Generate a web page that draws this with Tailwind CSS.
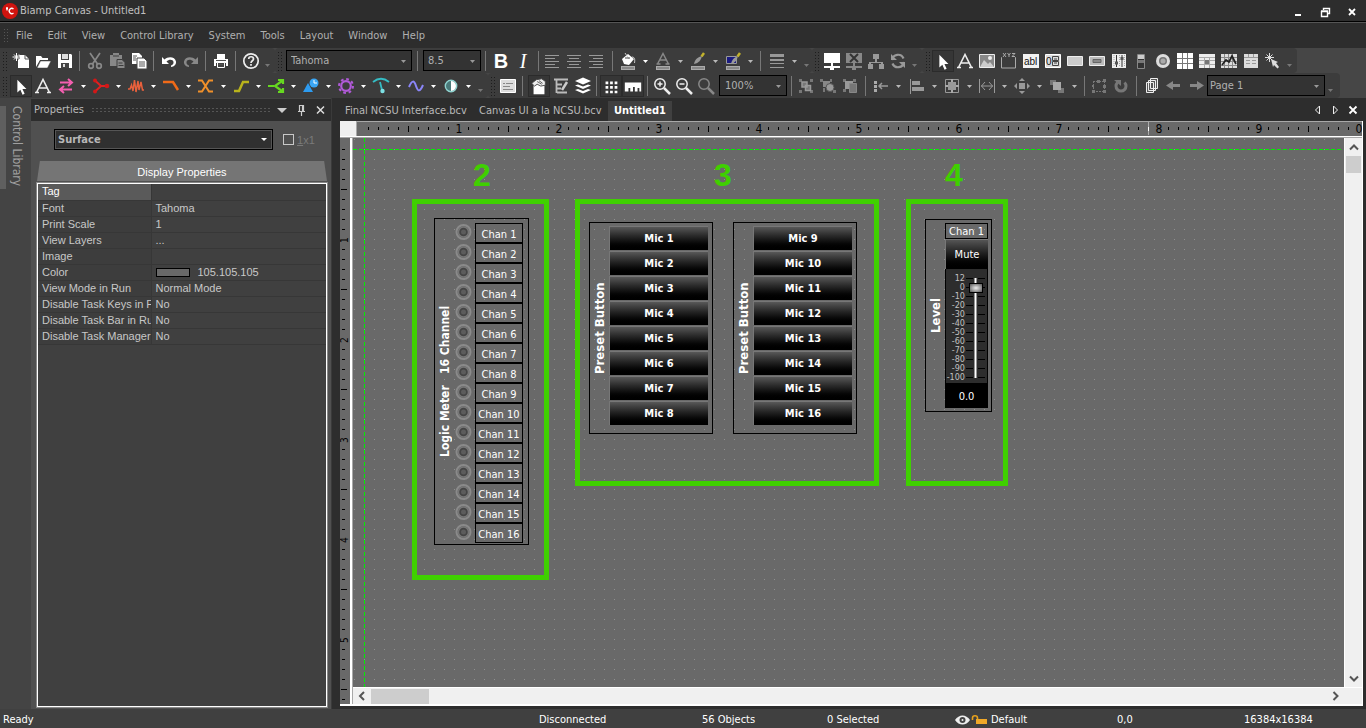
<!DOCTYPE html>
<html lang="en">
<head>
<meta charset="utf-8">
<title>Biamp Canvas - Untitled1</title>
<script src="https://cdn.jsdelivr.net/npm/@tailwindcss/browser@4"></script>
</head>
<body class="h-screen overflow-hidden flex flex-col bg-[#2d2d2d] text-[#b9b9b9] text-[11px] leading-4 font-['DejaVu_Sans_Condensed','Noto_Sans',sans-serif]">

<svg class="hidden">
  <symbol id="dn" viewBox="0 0 13 22"><path d="M4 10h5l-2.500 3z" fill="currentColor"/></symbol>
  <symbol id="more" viewBox="0 0 11 22"><path d="M3 14h5l-2.500 3z" fill="#777"/></symbol>
  <symbol id="arrow" viewBox="0 0 22 22"><path d="M7 3v14l3.300-3 2.400 5.500 2.300-1-2.400-5.300h4.400z" fill="#fff"/></symbol>
  <symbol id="letter" viewBox="0 0 22 22"><path d="M4.500 17.500L11 4.500l6.500 13M7 13h8M3 17.500h4M15 17.500h4" fill="none" stroke="#eee" stroke-width="1.600"/></symbol>
</svg>

<header class="h-[22px] shrink-0 flex items-center border-b border-black text-[#c0c0c0]">
  <svg class="w-[18px] h-[20px] ml-px mr-px shrink-0" viewBox="0 0 18 20"><circle cx="9" cy="10" r="8" fill="#d0140f"/><path d="M12.500 8a2.600 2.600 0 1 0 0 4M6 6v3.500M5 7.500h2" fill="none" stroke="#fff" stroke-width="1.300"/></svg>
  <h1 class="flex-1">Biamp Canvas - Untitled1</h1>
  <div class="flex text-white [&>button]:w-[27px] [&>button]:h-5">
    <button aria-label="Minimize"><svg class="w-[27px] h-5" viewBox="0 0 27 20"><path d="M10 14h6" stroke="#fff" stroke-width="2"/></svg></button>
    <button aria-label="Restore"><svg class="w-[27px] h-5" viewBox="0 0 27 20"><path d="M11.500 9V7.500h6v5H16M9.500 10.500h6v5h-6zM9 10h7" fill="none" stroke="#fff" stroke-width="1.400"/></svg></button>
    <button aria-label="Close"><svg class="w-[27px] h-5" viewBox="0 0 27 20"><path d="M10 8l6 6M16 8l-6 6" stroke="#fff" stroke-width="1.800"/></svg></button>
  </div>
</header>

<nav class="h-[26px] shrink-0 flex items-center gap-[15px] pl-[3px] border-t border-[#555] text-[#b0b0b0]">
  <span class="w-[5px] h-4 -mr-[7px] bg-[radial-gradient(#555_1px,transparent_1px)] bg-size-[3px_3px]"></span>
  <a href="#">File</a><a href="#">Edit</a><a href="#">View</a><a href="#">Control Library</a><a href="#">System</a><a href="#">Tools</a><a href="#">Layout</a><a href="#">Window</a><a href="#">Help</a>
</nav>

<div class="h-[50px] shrink-0 bg-[#464646] [&_button]:shrink-0 [&_button]:w-[22px] [&_button]:h-[22px] [&_svg]:h-[22px] [&_svg]:w-full [&_hr]:w-px [&_hr]:h-[20px] [&_hr]:bg-[#777] [&_hr]:border-0 [&_hr]:shrink-0">
  <!-- standard, text and objects toolbars -->
  <div class="flex h-[25px]">
    <div class="w-[275px] shrink-0 bg-[#3c3c3c] rounded-r flex items-center pl-[2px]">
      <span class="w-[6px] h-5 mr-[2px] bg-[radial-gradient(#1d1d1d_1px,transparent_1px)] bg-size-[3px_3px]"></span>
      <button aria-label="New"><svg viewBox="0 0 22 22"><path d="M9 5h6l4 4v9H8v-8l2-2z" fill="#fff"/><path d="M15 5v4h4" fill="none" stroke="#555"/><path d="M6.500 3v8M2.500 7h8M4 4.500l5 5M9 4.500l-5 5" stroke="#fff"/></svg></button>
      <button aria-label="Open"><svg viewBox="0 0 22 22"><path d="M4 17V6h5l1.500 2H16v2H8z" fill="#fff"/><path d="M5 18l3.500-7H19l-3.500 7z" fill="#fff" stroke="#3c3c3c" stroke-width=".5"/></svg></button>
      <button aria-label="Save"><svg viewBox="0 0 22 22"><path d="M4 4h13l1 1v13H4z" fill="#fff"/><path d="M7 4h8v6H7zM7 13h8v5H7z" fill="#444"/><path d="M8 4h6v5H8zM9 14h2v3H9z" fill="#ddd"/></svg></button>
      <hr class="mx-[3px]">
      <button class="ml-px" aria-label="Cut"><svg viewBox="0 0 22 22"><g fill="none" stroke="#888" stroke-width="1.700"><path d="M6 3l7.500 11M16 3L8.500 14"/><circle cx="7" cy="16" r="2.300"/><circle cx="15" cy="16" r="2.300"/></g></svg></button>
      <button aria-label="Paste"><svg viewBox="0 0 22 22"><path d="M4 5h3V3h6v2h3v4h-5v7H4z" fill="#888"/><path d="M11 9.500h5l3 3v6h-8z" fill="#888" stroke="#3c3c3c"/><path d="M7 6h6M12.500 13h4M12.500 15.500h5" stroke="#3c3c3c"/></svg></button>
      <button aria-label="Copy"><svg viewBox="0 0 22 22"><path d="M4 3h7l3 3v8H4z" fill="#fff"/><path d="M9 8h7l3 3v8H9z" fill="#fff" stroke="#444"/><path d="M5 6h4M5 8h3M5 10h3M11 12h6M11 14h6M11 16h6" stroke="#555"/></svg></button>
      <hr class="mx-[3px]">
      <button class="ml-px" aria-label="Undo"><svg viewBox="0 0 22 22"><path d="M4 7v7h7l-2.500-2.500C11 9 15 9 15.500 12c.3 2-1 3-2.500 3.500v1.500c3-.3 5.500-2.500 5-5.500-.8-5-8-5.500-11.500-2z" fill="#fff"/></svg></button>
      <button aria-label="Redo"><svg viewBox="0 0 22 22"><path d="M18 7v7h-7l2.500-2.500C11 9 7 9 6.500 12c-.3 2 1 3 2.500 3.500v1.500c-3-.3-5.500-2.500-5-5.500.8-5 8-5.500 11.500-2z" fill="#888"/></svg></button>
      <hr class="mx-[3px]">
      <button class="ml-px" aria-label="Print"><svg viewBox="0 0 22 22"><path d="M7 4h8v5H7z" fill="#fff"/><path d="M4 9h14v7h-2v-3H6v3H4z" fill="#fff"/><path d="M7.500 12.500h7v5h-7z" fill="#444" stroke="#fff"/><path d="M9 14.500h4M6 10.500h10" stroke="#555"/></svg></button>
      <hr class="mx-[3px]">
      <button class="ml-px" aria-label="Help"><svg viewBox="0 0 22 22"><circle cx="11" cy="11" r="7.200" fill="none" stroke="#eee" stroke-width="1.700"/><path d="M8.700 9c0-3 4.800-3 4.800 0 0 1.800-2.500 1.800-2.500 4M11 14v1.700" fill="none" stroke="#eee" stroke-width="1.700"/></svg></button>
      <svg class="max-w-[11px]"><use href="#more"/></svg>
    </div>
    <div class="w-[537px] shrink-0 bg-[#3c3c3c] rounded flex items-center pl-[2px]">
      <span class="w-[6px] h-5 mr-[3px] bg-[radial-gradient(#1d1d1d_1px,transparent_1px)] bg-size-[3px_3px] shrink-0"></span>
      <div class="relative w-[126px] shrink-0"><select aria-label="Font" class="appearance-none block w-full h-[21px] bg-[#333] border border-black pl-1 text-[#b0b0b0]"><option>Tahoma</option></select><svg class="absolute right-[2px] top-0 max-w-[13px] pointer-events-none text-[#999]"><use href="#dn"/></svg></div>
      <hr class="mx-[5px]">
      <div class="relative w-[58px] shrink-0"><select aria-label="Font size" class="appearance-none block w-full h-[21px] bg-[#333] border border-black pl-1 text-[#b0b0b0]"><option>8.5</option></select><svg class="absolute right-[2px] top-0 max-w-[13px] pointer-events-none text-[#999]"><use href="#dn"/></svg></div>
      <hr class="mx-[4px]">
      <button aria-label="Bold" class="font-['Liberation_Sans'] font-bold text-[20px] leading-5 text-white">B</button>
      <button aria-label="Italic" class="font-['Liberation_Serif'] italic text-[20px] leading-5 text-white">I</button>
      <hr class="ml-[4px] mr-[2px]">
      <button aria-label="Align left"><svg viewBox="0 0 22 22"><path d="M4 5.500h14M4 8.500h10M4 11.500h14M4 14.500h10M4 17.500h14" stroke="#999"/></svg></button>
      <button aria-label="Align center"><svg viewBox="0 0 22 22"><path d="M4 5.500h14M6 8.500h10M4 11.500h14M6 14.500h10M4 17.500h14" stroke="#999"/></svg></button>
      <button aria-label="Align right"><svg viewBox="0 0 22 22"><path d="M4 5.500h14M8 8.500h10M4 11.500h14M8 14.500h10M4 17.500h14" stroke="#999"/></svg></button>
      <hr class="ml-[5px] mr-[4px]">
      <button aria-label="Fill"><svg viewBox="0 0 22 22"><path d="M5 9l6-5 6 5-5 6-5-1z" fill="#fff"/><path d="M8 3l4 6M15 7c3 0 3 3 2.500 6" fill="none" stroke="#ccc"/><path d="M8 8h5" stroke="#444"/><rect x="4.500" y="16.500" width="13" height="3" fill="#888" stroke="#aaa"/></svg></button><button aria-label="Fill menu" class="w-[13px]! text-white"><svg><use href="#dn"/></svg></button>
      <button aria-label="Text color"><svg viewBox="0 0 22 22"><path d="M5.500 14L11 3.500 16.500 14M8 10h6M4.500 14h4M13.500 14h4" fill="none" stroke="#888" stroke-width="1.500"/><rect x="4.500" y="16.500" width="13" height="3" fill="#888" stroke="#aaa"/></svg></button><button aria-label="Text color menu" class="w-[13px]!"><svg><use href="#dn"/></svg></button>
      <button aria-label="Line color"><svg viewBox="0 0 22 22"><path d="M7 14c1-5 4-7 8-8-1 4-3 7-8 8z" fill="#999"/><path d="M14.500 6.500L17 3" stroke="#c3b32c" stroke-width="2.500"/><rect x="4.500" y="16.500" width="13" height="3" fill="#888" stroke="#aaa"/></svg></button><button aria-label="Line color menu" class="w-[13px]!"><svg><use href="#dn"/></svg></button>
      <button aria-label="Border color"><svg viewBox="0 0 22 22"><path d="M4.500 6.500h10v7h-10z" fill="#1a1a80" stroke="#999"/><path d="M9 14c1-5 4-7 7-8-1 4-3 7-7 8z" fill="#999"/><path d="M15.500 6.500L18 3" stroke="#c3b32c" stroke-width="2.500"/><rect x="4.500" y="16.500" width="13" height="3" fill="#888" stroke="#aaa"/></svg></button><button aria-label="Border color menu" class="w-[13px]!"><svg><use href="#dn"/></svg></button>
      <hr class="ml-[3px] mr-[5px]">
      <button aria-label="Line width"><svg viewBox="0 0 22 22"><path d="M4 5.500h14" stroke="#999" stroke-width="3"/><path d="M4 10h14" stroke="#999" stroke-width="2"/><path d="M4 13.500h14M4 17.500h14" stroke="#999"/></svg></button><button aria-label="Line width menu" class="w-[13px]!"><svg><use href="#dn"/></svg></button>
      <svg class="max-w-[11px]"><use href="#more"/></svg>
    </div>
    <div class="w-[110px] shrink-0 bg-[#3c3c3c] rounded flex items-center pl-[2px]">
      <span class="w-[6px] h-5 mr-px bg-[radial-gradient(#1d1d1d_1px,transparent_1px)] bg-size-[3px_3px]"></span>
      <button aria-label="Connect"><svg viewBox="0 0 22 22"><path d="M3 3h16v10h-7v3h7v2h-6v2H9v-2H3v-2h7v-3H3z" fill="#fff"/></svg></button>
      <button aria-label="Disconnect"><svg viewBox="0 0 22 22"><path d="M3 3h16v10h-7v3h7v2h-6v2H9v-2H3v-2h7v-3H3z" fill="#888"/><path d="M7 4l8 8M15 4l-8 8" stroke="#333" stroke-width="2"/></svg></button>
      <button aria-label="Network"><svg viewBox="0 0 22 22"><path d="M8 4h6v5h-2v3h6v2h1v5h-5v-5h2v-1H6v1h2v5H3v-5h1v-2h6V9H8z" fill="#999"/></svg></button>
      <button aria-label="Refresh"><svg viewBox="0 0 22 22"><path d="M16.500 8.500A6 6 0 0 0 5 10M5.500 13.500A6 6 0 0 0 17 12" fill="none" stroke="#999" stroke-width="2.200"/><path d="M4 4v6h6zM18 18v-6h-6z" fill="#999"/></svg></button>
      <svg class="max-w-[11px]"><use href="#more"/></svg>
    </div>
    <div class="w-[375px] shrink-0 bg-[#3c3c3c] rounded flex items-center pl-[3px]">
      <span class="w-[6px] h-5 mr-px bg-[radial-gradient(#1d1d1d_1px,transparent_1px)] bg-size-[3px_3px]"></span>
      <button aria-label="Select" class="bg-[#363636] border border-[#2b2b2b]"><svg><use href="#arrow"/></svg></button>
      <button aria-label="Text"><svg><use href="#letter"/></svg></button>
      <button aria-label="Image"><svg viewBox="0 0 22 22"><path d="M3.500 4.500h15v13h-15z" fill="#888" stroke="#eee"/><path d="M4 17l4-7 4 4 2-2 4 5z" fill="#ccc"/><circle cx="14" cy="8" r="2" fill="#eee"/></svg></button>
      <button aria-label="Frame"><svg viewBox="0 0 22 22"><path d="M4 7.500h-.5V18h14V7.500H17" fill="none" stroke="#aaa"/><path d="M5 3l3 4M8 3L5 7M9.500 3l1.500 2 1.500-2M11 5v2M14 3.500h3l-3 3h3" fill="none" stroke="#aaa"/></svg></button>
      <button aria-label="Text box"><svg viewBox="0 0 22 22"><rect x="3" y="4" width="16" height="14" fill="#f2f2f2"/><text x="4" y="15" font-family="Liberation Sans" font-size="10" fill="#111">abl</text></svg></button>
      <button aria-label="Spin box"><svg viewBox="0 0 22 22"><path d="M3.500 4.500h15v13h-15z" fill="#ddd" stroke="#fff"/><text x="4" y="15" font-family="Liberation Sans" font-size="10" fill="#111">0</text><path d="M10.500 6.500h6v4h-6zM10.500 11.500h6v4h-6zM12 9h3M12 13h3" fill="none" stroke="#444"/></svg></button>
      <button aria-label="Panel"><svg viewBox="0 0 22 22"><path d="M3.500 6.500h15v9h-15z" fill="#ccc" stroke="#eee"/></svg></button>
      <button aria-label="Button"><svg viewBox="0 0 22 22"><path d="M3.500 6.500h15v9h-15z" fill="#bbb" stroke="#eee"/><path d="M7 9.500h8v3H7z" fill="#888" stroke="#666"/></svg></button>
      <button aria-label="Sliders"><svg viewBox="0 0 22 22"><path d="M4 4h14v14H4z" fill="#eee"/><path d="M6 5v12M16.500 5v12M11.500 5v12" stroke="#aaa" stroke-dasharray="1 1"/><path d="M8.500 5v12M14 5v12" stroke="#333"/><path d="M7 11.500h3v3H7zM12.500 7h3v3h-3z" fill="#555"/></svg></button>
      <button aria-label="Meter"><svg viewBox="0 0 22 22"><path d="M7.500 4.500h7v14h-7z" fill="#333" stroke="#888"/><path d="M8 5h6v4H8z" fill="#ccc"/><path d="M8 10h6v3H8z" fill="#777"/></svg></button>
      <button aria-label="Knob"><svg viewBox="0 0 22 22"><circle cx="11" cy="11" r="7" fill="#ddd"/><circle cx="11" cy="11" r="4" fill="#777"/><circle cx="11" cy="11" r="2.500" fill="#aaa"/></svg></button>
      <button aria-label="Matrix"><svg viewBox="0 0 22 22"><path d="M3 3h16v16H3z" fill="#fff"/><path d="M3 8.500h16M3 13.500h16M8.500 3v16M13.500 3v16" stroke="#777"/></svg></button>
      <button aria-label="Table"><svg viewBox="0 0 22 22"><path d="M3 4h16v14H3z" fill="#eee"/><path d="M3 7.500h16M3 14.500h16M8.500 7v11M13.500 7v11M3 10.500h16" stroke="#aaa"/><path d="M9 10h4v4H9z" fill="#777"/></svg></button>
      <button aria-label="Chart"><svg viewBox="0 0 22 22"><path d="M3 4h16v14H3z" fill="#ddd"/><path d="M3 7.500h16M3 11.500h16M3 15.500h16M6.500 4v14M10.500 4v14M14.500 4v14" stroke="#888"/><path d="M4 15l4-5 3 2 3-6 4 8" fill="none" stroke="#222" stroke-width="1.800"/></svg></button>
      <button aria-label="Tabs"><svg viewBox="0 0 22 22"><path d="M4 7V4h14v14H4z" fill="#ddd"/><path d="M4 7.500h14M8.500 4v3M13.500 4v3M6 10.500h4M12 10.500h4M6 13.500h4M12 13.500h4" stroke="#999"/></svg></button>
      <button aria-label="Wand"><svg viewBox="0 0 22 22"><path d="M7.500 3v9M3 7.500h9M4.500 4.500l6 6M10.500 4.500l-6 6" stroke="#ddd"/><path d="M9 9l7 3-2 1 3 4-1.500 1.500-3.500-3.500-1 2z" fill="#ddd"/></svg></button>
      <svg class="max-w-[11px]"><use href="#more"/></svg>
    </div>
  </div>

  <!-- lines, view and arrangement toolbars -->
  <div class="flex h-[25px]">
    <div class="w-[488px] shrink-0 bg-[#3c3c3c] rounded-r flex items-center pl-[2px] text-white">
      <span class="w-[6px] h-5 mr-[2px] bg-[radial-gradient(#1d1d1d_1px,transparent_1px)] bg-size-[3px_3px]"></span>
      <button aria-label="Select" class="bg-[#363636] border border-[#2b2b2b]"><svg><use href="#arrow"/></svg></button>
      <button aria-label="Text" class="mr-px"><svg><use href="#letter"/></svg></button>
      <button aria-label="Arrows"><svg viewBox="0 0 22 22"><path d="M5 7.500h11M13 4l4 3.500-4 3.500M17 14.500H6M9 11l-4 3.500L9 18" fill="none" stroke="#f45fb0" stroke-width="2"/></svg></button><button aria-label="Arrows menu" class="w-[13px]!"><svg><use href="#dn"/></svg></button>
      <button aria-label="Mixer"><svg viewBox="0 0 22 22"><path d="M5 5.500l6 5.500-6 5.500M10 11h8" fill="none" stroke="#e02020" stroke-width="2"/><circle cx="5" cy="5.500" r="2" fill="#d01818"/><circle cx="5" cy="16.500" r="2" fill="#d01818"/><circle cx="17" cy="11" r="2.300" fill="#d01818"/></svg></button><button aria-label="Mixer menu" class="w-[13px]!"><svg><use href="#dn"/></svg></button>
      <button aria-label="Equalizer"><svg viewBox="0 0 22 22"><path d="M3 14h2l1.500-4L8 16l1.500-11L11 17l2-11 1 9 2-8 1.500 8H19" fill="none" stroke="#e8603c" stroke-width="1.500"/></svg></button><button aria-label="Equalizer menu" class="w-[13px]!"><svg><use href="#dn"/></svg></button>
      <button aria-label="Filter"><svg viewBox="0 0 22 22"><path d="M3 7h10l5 8" fill="none" stroke="#f06a18" stroke-width="2.500"/></svg></button><button aria-label="Filter menu" class="w-[13px]!"><svg><use href="#dn"/></svg></button>
      <button aria-label="Crossover"><svg viewBox="0 0 22 22"><path d="M3 5.500h4l7 11h4M18 5.500h-4l-7 11H3" fill="none" stroke="#f0902a" stroke-width="2"/></svg></button><button aria-label="Crossover menu" class="w-[13px]!"><svg><use href="#dn"/></svg></button>
      <button aria-label="Dynamics"><svg viewBox="0 0 22 22"><path d="M4 16h5l4-9h6" fill="none" stroke="#b9b31c" stroke-width="2.500"/></svg></button><button aria-label="Dynamics menu" class="w-[13px]!"><svg><use href="#dn"/></svg></button>
      <button aria-label="Router"><svg viewBox="0 0 22 22"><path d="M3 11h6M17 6l-7 5 7 5M13 5h5v4M13 17h5v-4" fill="none" stroke="#66d820" stroke-width="2.200"/></svg></button><button aria-label="Router menu" class="w-[13px]!"><svg><use href="#dn"/></svg></button>
      <button aria-label="Delay"><svg viewBox="0 0 22 22"><path d="M3 17l5-9 5 9z" fill="#2d9bf0"/><circle cx="14" cy="8" r="4.500" fill="#3aa6f5"/><path d="M14 5v3h3" fill="none" stroke="#fff"/></svg></button><button aria-label="Delay menu" class="w-[13px]!"><svg><use href="#dn"/></svg></button>
      <button aria-label="Control"><svg viewBox="0 0 22 22"><circle cx="11" cy="11" r="4.800" fill="none" stroke="#b05ad8" stroke-width="2.200"/><circle cx="11" cy="11" r="7" fill="none" stroke="#b05ad8" stroke-width="2" stroke-dasharray="2.750 2.750"/></svg></button><button aria-label="Control menu" class="w-[13px]!"><svg><use href="#dn"/></svg></button>
      <button aria-label="Meter"><svg viewBox="0 0 22 22"><path d="M3 7c5-4 11-4 16 0M10 7l2 8" fill="none" stroke="#35bcc4" stroke-width="1.800"/><circle cx="12.500" cy="16" r="2.200" fill="#7de0e4"/></svg></button><button aria-label="Meter menu" class="w-[13px]!"><svg><use href="#dn"/></svg></button>
      <button aria-label="Generator"><svg viewBox="0 0 22 22"><path d="M4 12c3-7 5-7 7-1s4 6 7-1" fill="none" stroke="#8b86f8" stroke-width="2"/></svg></button><button aria-label="Generator menu" class="w-[13px]!"><svg><use href="#dn"/></svg></button>
      <button aria-label="Diagnostics"><svg viewBox="0 0 22 22"><circle cx="11" cy="11" r="5.700" fill="#4a7a7a" stroke="#8fd3d0" stroke-width="1.400"/><path d="M11 6a5 5 0 0 1 0 10z" fill="#fff"/></svg></button><button aria-label="Diagnostics menu" class="w-[13px]!"><svg><use href="#dn"/></svg></button>
      <svg class="max-w-[11px]"><use href="#more"/></svg>
    </div>
    <div class="flex-1 max-w-[852px] bg-[#3c3c3c] rounded flex items-center pl-[2px]">
      <span class="w-[6px] h-5 mr-px bg-[radial-gradient(#1d1d1d_1px,transparent_1px)] bg-size-[3px_3px] shrink-0"></span>
      <button aria-label="Properties sheet"><svg viewBox="0 0 22 22"><path d="M3.500 4.500h15v13h-15z" fill="#ddd" stroke="#fff"/><path d="M6 8.500h2M9 8.500h7M6 11.500h7M6 14.500h10" stroke="#888"/></svg></button>
      <hr class="mx-[3px]">
      <button aria-label="Properties" class="bg-[#363636] border border-[#2b2b2b] ml-[2px]"><svg viewBox="0 0 22 22"><path d="M5 8h12v11H5z" fill="#fff"/><path d="M3 7l5-4 6-1 4 3v4l-5 1-4-2-3 2z" fill="#eee" stroke="#444"/><path d="M9 5l5 3M11 4l4 3" stroke="#555"/></svg></button>
      <button aria-label="Layers tree"><svg viewBox="0 0 22 22"><path d="M4 4.500h14M6.500 5v13M7 9.500h5M7 13.500h4M7 17.500h10" fill="none" stroke="#bbb" stroke-width="1.800"/><path d="M17 7l-5 8" stroke="#ccc" stroke-width="2.500"/></svg></button>
      <button aria-label="Layers"><svg viewBox="0 0 22 22"><path d="M3 6l8-3.500L19 6l-8 3.500zM3 10.500l3-1 5 2 5-2 3 1-8 3.500zM3 15l3-1 5 2 5-2 3 1-8 3.500z" fill="#fff"/></svg></button>
      <hr class="ml-[2px] mr-[3px] bg-[#777]">
      <button aria-label="Grid" class="bg-[#363636] border border-[#2b2b2b]"><svg viewBox="0 0 22 22"><path d="M5 6.500h13M5 11.500h13M5 16.500h13" stroke="#fff" stroke-width="3" stroke-dasharray="3 2"/></svg></button>
      <button aria-label="Rulers" class="bg-[#363636] border border-[#2b2b2b]"><svg viewBox="0 0 22 22"><path d="M2 6h18v10h-2v-4h-2v4h-3v-5h-2v5H8v-4H6v4H2z" fill="#fff"/></svg></button>
      <hr class="mx-[3px]">
      <button aria-label="Zoom in"><svg viewBox="0 0 22 22"><g fill="none" stroke="#eee" stroke-width="1.500"><circle cx="9" cy="9" r="5.200"/><path d="M6.500 9h5M9 6.500v5"/><path d="M13 13l6 6" stroke-width="2.500"/></g></svg></button>
      <button aria-label="Zoom out"><svg viewBox="0 0 22 22"><g fill="none" stroke="#eee" stroke-width="1.500"><circle cx="9" cy="9" r="5.200"/><path d="M6.500 9h5"/><path d="M13 13l6 6" stroke-width="2.500"/></g></svg></button>
      <button aria-label="Zoom"><svg viewBox="0 0 22 22"><g fill="none" stroke="#888" stroke-width="1.500"><circle cx="9" cy="9" r="5.200"/><path d="M13 13l6 6" stroke-width="2.500"/></g></svg></button>
      <div class="relative w-[68px] shrink-0 ml-[2px]"><select aria-label="Zoom level" class="appearance-none block w-full h-[21px] bg-[#333] border border-black pl-[5px] text-[#b0b0b0]"><option>100%</option></select><svg class="absolute right-[2px] top-0 max-w-[13px] pointer-events-none text-[#999]"><use href="#dn"/></svg></div>
      <hr class="ml-[4px] mr-[3px]">
      <button aria-label="Group"><svg viewBox="0 0 22 22"><path d="M4 4h3v3H4zM15 4h3v3h-3zM4 15h3v3H4zM15 15h3v3h-3z" fill="#777"/><path d="M7 7h5v5H7zM10.500 10.500h5v5h-5z" fill="#777" stroke="#999" stroke-width="1.500"/></svg></button>
      <button aria-label="Ungroup"><svg viewBox="0 0 22 22"><path d="M3 4h3v3H3zM13 4h2v3h-2zM6 13h2v4H6zM16 15h3v3h-3z" fill="#777"/><path d="M6 6h7v6H6z" fill="#888"/><circle cx="13" cy="12.500" r="4" fill="#999" stroke="#555"/></svg></button>
      <button aria-label="Regroup"><svg viewBox="0 0 22 22"><path d="M4 4h3v3H4zM14 4h3v3h-3zM4 14h3v3H4z" fill="#777"/><path d="M6 6h8v8H6z" fill="#999"/><path d="M10.500 8.500h7v9h-7z" fill="#777" stroke="#888"/></svg></button>
      <hr class="ml-[4px] mr-[4px]">
      <button aria-label="Nudge"><svg viewBox="0 0 22 22"><path d="M5.500 6v11" stroke="#aaa" stroke-width="3" stroke-dasharray="3 1"/><path d="M18 11H9M12 8l-3 3 3 3" fill="none" stroke="#999" stroke-width="1.500"/></svg></button><button aria-label="Nudge menu" class="w-[13px]!"><svg><use href="#dn"/></svg></button>
      <button aria-label="Align" class="ml-px"><svg viewBox="0 0 22 22"><path d="M4.500 4v15" stroke="#999"/><path d="M6 6h8v4H6zM6 12h12v4H6z" fill="#999"/></svg></button><button aria-label="Align menu" class="w-[13px]!"><svg><use href="#dn"/></svg></button>
      <button aria-label="Center"><svg viewBox="0 0 22 22"><path d="M4.500 4.500h13v13h-13z" fill="none" stroke="#999"/><path d="M7 7h8v8H7z" fill="#999"/><path d="M4 11h3M15 11h3M11 4v3M11 15v3" stroke="#aaa" stroke-width="2"/></svg></button><button aria-label="Center menu" class="w-[13px]!"><svg><use href="#dn"/></svg></button>
      <button aria-label="Space"><svg viewBox="0 0 22 22"><path d="M3.500 4v14M18.500 4v14M5 11h12M9 7l-3.500 4L9 15M13 7l3.500 4-3.500 4" fill="none" stroke="#999"/></svg></button><button aria-label="Space menu" class="w-[13px]!"><svg><use href="#dn"/></svg></button>
      <button aria-label="Size"><svg viewBox="0 0 22 22"><path d="M8 8h6v6H8zM11 3l3 3H8zM11 19l3-3H8zM3 11l3-3v6zM19 11l-3-3v6z" fill="#999"/></svg></button><button aria-label="Size menu" class="w-[13px]!"><svg><use href="#dn"/></svg></button>
      <button aria-label="Order"><svg viewBox="0 0 22 22"><path d="M4 5h6v5H4zM12 13h6v5h-6z" fill="#777"/><path d="M7 7h8v8H7z" fill="#aaa"/></svg></button><button aria-label="Order menu" class="w-[13px]!"><svg><use href="#dn"/></svg></button>
      <hr class="ml-[3px] mr-[3px]">
      <button aria-label="Edit points"><svg viewBox="0 0 22 22"><path d="M5 6.500h11M5 16.500h11M5.500 6v11M16.500 6v11" fill="none" stroke="#777" stroke-dasharray="2 1"/><path d="M4 10h2v2H4zM4 15h3v3H4zM9 5h3v3H9zM15 4h3v3h-3zM15 10h3v3h-3zM15 15h3v3h-3z" fill="#777"/></svg></button>
      <button aria-label="Rotate"><svg viewBox="0 0 22 22"><path d="M7.500 7.500a5 5 0 1 0 7 0" fill="none" stroke="#777" stroke-width="3"/><path d="M4 5h7v6z" fill="#777"/></svg></button>
      <hr class="ml-[4px] mr-[4px]">
      <button aria-label="Pages"><svg viewBox="0 0 22 22"><path d="M9.500 3.500h7v10h-7zM7.500 5.500h7v10h-7zM5.500 7.500h7v10h-7z" fill="#555" stroke="#eee"/></svg></button>
      <button aria-label="Previous page"><svg viewBox="0 0 22 22"><path d="M3 10.500L10 6v3h7v3h-7v3z" fill="#888"/></svg></button>
      <button aria-label="Next page"><svg viewBox="0 0 22 22"><path d="M19 10.500L12 6v3H5v3h7v3z" fill="#888"/></svg></button>
      <div class="relative w-[118px] shrink-0"><select aria-label="Page" class="appearance-none block w-full h-[21px] bg-[#333] border border-black pl-[2px] text-[#b0b0b0]"><option>Page 1</option></select><svg class="absolute right-[2px] top-0 max-w-[13px] pointer-events-none text-[#999]"><use href="#dn"/></svg></div>
      <svg class="max-w-[11px]"><use href="#more"/></svg>
    </div>
  </div>
</div>

<main class="flex-1 min-h-0 flex">
  <aside class="w-[31px] shrink-0 bg-[#444] pt-2">
    <button class="flex items-center h-[83px] border-l-[6px] border-[#5f5f5f] pl-[3px] text-[12px] text-[#a0a0a0] [writing-mode:vertical-rl]">Control Library</button>
  </aside>

  <section class="w-[301px] shrink-0 flex flex-col bg-[#505050] border-r border-[#3a3a3a]">
    <div class="h-[23px] shrink-0 bg-[#2d2d2d] flex items-center pl-[3px] border-t border-[#444]">
      <h2 class="w-[57px]">Properties</h2>
      <span class="flex-1 h-[6px] bg-[radial-gradient(#555_1px,transparent_1px)] bg-size-[4px_3px]"></span>
      <button aria-label="Panel menu"><svg class="w-[22px] h-4" viewBox="0 0 22 16"><path d="M7 6h10l-5 5z" fill="#ccc"/></svg></button>
      <button aria-label="Pin"><svg class="w-[18px] h-4" viewBox="0 0 18 16"><path d="M7.500 9V3.500h4V9M6 9.500h7M9.500 10v4M10.500 4v5" fill="none" stroke="#ccc" stroke-width="1.200"/></svg></button>
      <button aria-label="Close panel"><svg class="w-[21px] h-4" viewBox="0 0 21 16"><path d="M7 4.500l7 7M14 4.500l-7 7" stroke="#ddd" stroke-width="1.500"/></svg></button>
    </div>
    <div class="flex items-center pl-[23px] pt-2">
      <div class="relative w-[219px] shrink-0"><select aria-label="Object" class="appearance-none block w-full h-[21px] bg-[#303030] border border-black outline outline-[#555] -outline-offset-2 pl-[3px] font-bold text-[#b8b8b8]"><option>Surface</option></select><svg class="absolute right-[4px] top-0 w-[11px] h-5 pointer-events-none text-white" viewBox="0 0 11 20"><path d="M3 9h6l-3 3z" fill="currentColor"/></svg></div>
      <label class="ml-[10px] flex items-center gap-[3px] text-[#7a7a7a] font-['Liberation_Sans']"><input type="checkbox" class="appearance-none size-[11px] border border-[#c8c8c8]"><span><u>1</u>x1</span></label>
    </div>
    <div class="flex-1 flex flex-col px-[6px] pb-[2px] pt-[11px] mr-[-2px] w-[302px] font-['Liberation_Sans',sans-serif]">
      <h3 class="h-[20px] flex items-center justify-center pt-px bg-[#757575] text-white [clip-path:polygon(1%_0,99%_0,100%_100%,0_100%)]">Display Properties</h3>
      <div class="flex-1 mt-[2px] border border-white outline outline-[#888] bg-[#404040] text-[#c8c8c8]">
        <table class="w-full table-fixed border-collapse [&_tr]:h-4 [&_tr]:border-b [&_tr]:border-[#373737] [&_th]:w-[113px] [&_th]:p-0 [&_th]:pl-[4px] [&_th]:font-normal [&_th]:text-left [&_th]:bg-[#3d3d3d] [&_th]:border-r [&_th]:border-[#373737] [&_th]:whitespace-nowrap [&_th]:overflow-hidden [&_td]:p-0 [&_td]:pl-1 leading-[15px]">
          <tr><th class="bg-[#5a5a5a]! text-white">Tag</th><td></td></tr>
          <tr><th>Font</th><td>Tahoma</td></tr>
          <tr><th>Print Scale</th><td>1</td></tr>
          <tr><th>View Layers</th><td>...</td></tr>
          <tr><th>Image</th><td></td></tr>
          <tr><th>Color</th><td><span class="inline-block align-middle w-[34px] h-[9px] mr-2 border border-black bg-[#696969]"></span>105.105.105</td></tr>
          <tr><th>View Mode in Run</th><td>Normal Mode</td></tr>
          <tr><th>Disable Task Keys in F</th><td>No</td></tr>
          <tr><th>Disable Task Bar in Ru</th><td>No</td></tr>
          <tr><th>Disable Task Manager</th><td>No</td></tr>
        </table>
      </div>
    </div>
  </section>

  <section class="flex-1 min-w-0 ml-1 flex flex-col pl-1 pr-[3px] pb-[3px]">
    <div class="h-[23px] shrink-0 flex items-center pl-[5px] pt-[2px] whitespace-nowrap">
      <a href="#" class="w-[134px]">Final NCSU Interface.bcv</a>
      <a href="#" class="w-[129px]">Canvas UI a la NCSU.bcv</a>
      <a href="#" class="h-[20px] w-[64px] flex items-center justify-center bg-[#404040] text-white font-bold">Untitled1</a>
      <div class="ml-auto flex">
        <button aria-label="Previous tab"><svg class="w-[18px] h-4" viewBox="0 0 18 16"><path d="M10.500 3v8l-4-4z" fill="none" stroke="#eee"/></svg></button>
        <button aria-label="Next tab"><svg class="w-[18px] h-4" viewBox="0 0 18 16"><path d="M6.500 3v8l4-4z" fill="none" stroke="#eee"/></svg></button>
        <button aria-label="Close tab"><svg class="w-[18px] h-4" viewBox="0 0 18 16"><path d="M4.500 3.500l7 7M11.500 3.500l-7 7" stroke="#fff" stroke-width="1.800"/></svg></button>
      </div>
    </div>
    <div class="flex-1 min-h-0 flex flex-col border-r border-b-2 border-white bg-white">
      <div class="h-[15px] mb-px shrink-0 flex">
        <div class="w-4 bg-[#f0f0f0]"></div>
        <div class="flex-1 min-w-0 relative overflow-hidden bg-[#696969] border-t border-l border-[#a8a8a8]">
          <svg class="w-full h-[14px] absolute inset-0"><defs><pattern id="tx" x="1" width="100" height="14" patternUnits="userSpaceOnUse"><path d="M10.500 5v3M20.500 5v3M30.500 5v3M40.500 5v3M50.500 4v6M60.500 5v3M70.500 5v3M80.500 5v3M90.500 5v3" stroke="#000"/></pattern></defs><rect width="100%" height="14" fill="url(#tx)"/><path d="M791.500 0v13" stroke="#aaa"/><path d="M791.500 5v4" stroke="#fff"/></svg>
          <div id="hnums" class="absolute left-[52px] top-0 flex h-[14px] text-black leading-[14px] text-[12px]"></div>
        </div>
      </div>
      <div class="flex-1 min-h-0 flex border-t border-[#a8a8a8]">
        <div class="w-[11px] shrink-0 relative overflow-hidden bg-[#696969] border-r border-white">
          <svg class="w-[10px] h-full absolute inset-0"><defs><pattern id="ty" y="1" width="10" height="100" patternUnits="userSpaceOnUse"><path d="M2 10.500h3M2 20.500h3M2 30.500h3M2 40.500h3M1 50.500h6M2 60.500h3M2 70.500h3M2 80.500h3M2 90.500h3" stroke="#000"/></pattern></defs><rect width="10" height="100%" fill="url(#ty)"/></svg>
          <div id="vnums" class="absolute top-[52px] left-0 text-black leading-[10px] text-[10px]"></div>
        </div>
        <div class="flex-1 min-w-0 flex flex-col ml-px border-l border-[#a8a8a8]">
          <div class="flex-1 min-h-0 flex">
            <div id="canvas" class="flex-1 min-w-0 relative overflow-hidden bg-[#696969] text-white">
              <svg class="absolute inset-0 w-full h-full"><defs><pattern id="dots" width="10" height="10" patternUnits="userSpaceOnUse"><rect x="1" y="1" width="1" height="1" fill="#8f8f8f"/></pattern></defs><rect width="100%" height="100%" fill="url(#dots)"/><path d="M0 11.500h988M11.500 0v560" stroke="#00f000" stroke-dasharray="4 2"/></svg>

              <div class="absolute left-[120px] top-[19px] w-[20px] text-[32px] leading-9 font-bold text-[#3fd000] font-['Liberation_Sans']">2</div>
              <div class="absolute left-[361px] top-[19px] w-[20px] text-[32px] leading-9 font-bold text-[#3fd000] font-['Liberation_Sans']">3</div>
              <div class="absolute left-[592px] top-[19px] w-[20px] text-[32px] leading-9 font-bold text-[#3fd000] font-['Liberation_Sans']">4</div>
              <div class="absolute left-[59px] top-[61px] w-[137px] h-[381px] border-[5px] border-[#3fd000]"></div>
              <div class="absolute left-[222px] top-[61px] w-[304px] h-[287px] border-[5px] border-[#3fd000]"></div>
              <div class="absolute left-[553px] top-[61px] w-[102px] h-[287px] border-[5px] border-[#3fd000]"></div>

              <div class="absolute left-[81px] top-[80px] w-[95px] h-[327px] border border-black flex pr-[5px]">
                <div class="w-[20px] rotate-180 [writing-mode:vertical-rl] text-center font-bold text-[12px] leading-5 whitespace-pre">Logic Meter   16 Channel</div>
                <div id="chans" class="flex-1 pt-1"></div>
              </div>
              <div class="absolute left-[236px] top-[84px] w-[124px] h-[212px] border border-black flex pr-1">
                <div class="w-[19px] rotate-180 [writing-mode:vertical-rl] text-center font-bold text-[13px] leading-[19px]">Preset Button</div>
                <div id="micsA" class="flex-1 pt-[3px]"></div>
              </div>
              <div class="absolute left-[380px] top-[84px] w-[124px] h-[212px] border border-black flex pr-1">
                <div class="w-[19px] rotate-180 [writing-mode:vertical-rl] text-center font-bold text-[13px] leading-[19px]">Preset Button</div>
                <div id="micsB" class="flex-1 pt-[3px]"></div>
              </div>

              <div class="absolute left-[572px] top-[81px] w-[67px] h-[193px] border border-black flex pr-[3px]">
                <div class="w-[19px] rotate-180 [writing-mode:vertical-rl] text-center font-bold text-[13px] leading-[19px]">Level</div>
                <div class="flex-1 pt-[3px] text-center">
                  <div class="h-4 border border-black leading-4">Chan 1</div>
                  <button class="block w-full h-[30px] border-t border-l border-[#777] bg-linear-to-b from-[#555] to-black">Mute</button>
                  <div class="h-[114px] bg-[#2d2d2d] border-x border-black flex pt-1 relative">
                    <div class="w-[19px] pt-px text-right text-[9px] leading-[9px] text-[#c0c0c0] whitespace-nowrap flex flex-col items-end"><span>12</span><span>0</span><span>-10</span><span>-20</span><span>-30</span><span>-40</span><span>-50</span><span>-60</span><span>-70</span><span>-80</span><span>-90</span><span>-100</span></div>
                    <svg class="w-[21px] h-[110px]" viewBox="0 0 21 110"><path d="M1 5.500h7M13 5.500h7M1 14.500h7M13 14.500h7M1 23.500h7M13 23.500h7M1 32.500h7M13 32.500h7M1 41.500h7M13 41.500h7M1 50.500h7M13 50.500h7M1 59.500h7M13 59.500h7M1 68.500h7M13 68.500h7M1 77.500h7M13 77.500h7M1 86.500h7M13 86.500h7M1 95.500h7M13 95.500h7M1 104.500h7M13 104.500h7" stroke="#000"/><path d="M10.500 5v100" stroke="#fff" stroke-width="2"/></svg>
                    <input type="range" aria-label="Level" min="0" max="100" value="90" class="absolute left-[22px] top-[4px] w-[15px] h-[110px] appearance-none bg-transparent [writing-mode:vertical-lr] [direction:rtl] [&::-webkit-slider-thumb]:appearance-none [&::-webkit-slider-thumb]:w-[14px] [&::-webkit-slider-thumb]:h-[10px] [&::-webkit-slider-thumb]:border [&::-webkit-slider-thumb]:border-black [&::-webkit-slider-thumb]:bg-[radial-gradient(#eee,#555)]">
                  </div>
                  <output class="block h-[25px] bg-black leading-[28px]">0.0</output>
                </div>
              </div>
            </div>
            <div class="w-[18px] shrink-0 bg-[#f0f0f0] flex flex-col items-center border-l border-white">
              <svg class="w-4 h-[18px]" viewBox="0 0 16 18"><path d="M4 11.500l4-4 4 4" fill="none" stroke="#555" stroke-width="2"/></svg>
              <div class="w-[15px] h-[17px] bg-[#cdcdcd]"></div>
              <svg class="w-4 h-[18px] mt-auto" viewBox="0 0 16 18"><path d="M4 7.500l4 4 4-4" fill="none" stroke="#555" stroke-width="2"/></svg>
            </div>
          </div>
          <div class="h-[17px] shrink-0 bg-[#f0f0f0] border-t border-white flex items-center pr-[18px]">
            <svg class="w-[18px] h-4" viewBox="0 0 18 16"><path d="M11 4L7 8l4 4" fill="none" stroke="#555" stroke-width="2"/></svg>
            <div class="w-[58px] h-[15px] bg-[#cdcdcd]"></div>
            <svg class="w-[17px] h-4 ml-auto" viewBox="0 0 17 16"><path d="M6.500 4l4 4-4 4" fill="none" stroke="#555" stroke-width="2"/></svg>
          </div>
        </div>
      </div>
    </div>
  </section>
</main>

<footer class="h-[19px] shrink-0 bg-[#404040] text-white flex items-center pl-[3px] pt-[2px]">
  <span class="w-[536px]">Ready</span>
  <span class="w-[163px]">Disconnected</span>
  <span class="w-[125px]">56 Objects</span>
  <span class="w-[127px]">0 Selected</span>
  <svg class="w-[37px] h-4" viewBox="0 0 37 16"><path d="M1 8c4-6 11-6 15 0-4 6-11 6-15 0z" fill="#eee"/><circle cx="8.500" cy="8" r="3" fill="#444"/><circle cx="8.500" cy="8" r="1" fill="#eee"/><path d="M18.500 8V6c0-3 5-3 5 0v3" fill="none" stroke="#e8a21c" stroke-width="1.600"/><path d="M22 7h11v5H22z" fill="#f0a828"/></svg>
  <span class="w-[126px]">Default</span>
  <span class="w-[127px]">0,0</span>
  <span>16384x16384</span>
</footer>

<script>
const el = id => document.getElementById(id);
el('hnums').innerHTML = [1,2,3,4,5,6,7,8,9,0].map(n => `<span class="w-[100px] shrink-0 text-center">${n}</span>`).join('');
el('vnums').innerHTML = [1,2,3,4,5].map(n => `<span class="block w-[10px] h-[100px] text-center rotate-180 [writing-mode:vertical-rl]">${n}</span>`).join('');
el('chans').innerHTML = Array.from({length: 16}, (_, i) => `<div class="flex h-5"><svg class="w-[20px] h-[18px] shrink-0" viewBox="0 0 20 18"><circle cx="8.500" cy="9" r="7" fill="#666" stroke="#8a8a8a" stroke-width="2"/><circle cx="8.500" cy="9" r="5" fill="#444" stroke="#777" stroke-width="1.500"/><circle cx="8.500" cy="9" r="2.500" fill="#5c5c5c"/></svg><span class="flex-1 h-5 border border-black text-center leading-[21px]">Chan ${i + 1}</span></div>`).join('');
const mic = n => `<button class="block w-full h-6 mb-px border-t border-l border-[#777] bg-linear-to-b from-[#585858] to-black font-bold leading-5">Mic ${n}</button>`;
el('micsA').innerHTML = [1,2,3,4,5,6,7,8].map(mic).join('');
el('micsB').innerHTML = [9,10,11,12,13,14,15,16].map(mic).join('');
</script>
</body>
</html>
